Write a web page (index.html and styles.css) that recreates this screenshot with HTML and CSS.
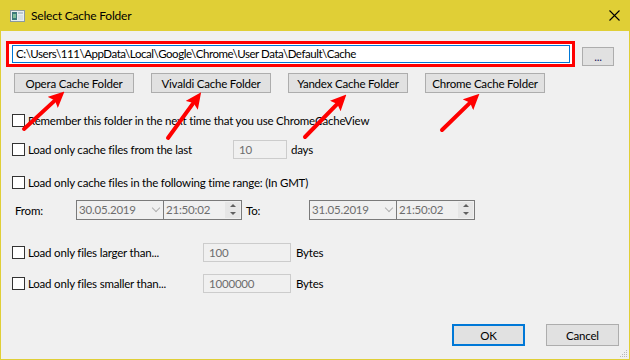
FILE: index.html
```html
<!DOCTYPE html>
<html lang="en">
<head>
    <meta charset="UTF-8">
    <title>Select Cache Folder</title>
    <link rel="stylesheet" href="styles.css">
</head>
<body>
    <div class="window">
        <div class="titlebar">
            <svg class="app-icon" width="15" height="12" viewBox="0 0 15 12">
                <rect x="0.5" y="0.5" width="14" height="11" fill="#e8eef0" stroke="#8a9aa0"/>
                <rect x="2" y="2" width="5" height="8" fill="#3c7a7a"/>
                <rect x="3" y="4" width="3" height="4" fill="#7fbf9a"/>
                <rect x="8" y="2" width="5" height="2" fill="#b8c8d0"/>
                <rect x="8" y="5" width="5" height="5" fill="#d6e0e4"/>
            </svg>
            <span class="title">Select Cache Folder</span>
            <svg class="close" width="11" height="11" viewBox="0 0 11 11">
                <path d="M0.5 0.5 L10.5 10.5 M10.5 0.5 L0.5 10.5" stroke="#000" stroke-width="1.1"/>
            </svg>
        </div>

        <div class="content">
            <div class="path-row">
                <div class="highlight">
                    <div class="path-input">C:\Users\111\AppData\Local\Google\Chrome\User Data\Default\Cache</div>
                </div>
                <button class="btn browse">...</button>
            </div>

            <div class="preset-row">
                <button class="btn preset">Opera Cache Folder</button>
                <button class="btn preset">Vivaldi Cache Folder</button>
                <button class="btn preset">Yandex Cache Folder</button>
                <button class="btn preset">Chrome Cache Folder</button>
            </div>

            <label class="row row-remember"><span class="box"></span>Remember this folder in the next time that you use ChromeCacheView</label>

            <div class="row row-last">
                <label class="check-label"><span class="box"></span>Load only cache files from the last</label>
                <div class="field days-field">10</div>
                <span class="unit">days</span>
            </div>

            <label class="row row-range"><span class="box"></span>Load only cache files in the following time range: (In GMT)</label>

            <div class="row row-from">
                <span class="from-label">From:</span>
                <div class="datetime">
                    <div class="date">30.05.2019<span class="chevron"></span></div>
                    <div class="time">21:50:02<span class="spin"><span class="up"></span><span class="down"></span></span></div>
                </div>
                <span class="to-label">To:</span>
                <div class="datetime">
                    <div class="date">31.05.2019<span class="chevron"></span></div>
                    <div class="time">21:50:02<span class="spin"><span class="up"></span><span class="down"></span></span></div>
                </div>
            </div>

            <div class="row row-larger">
                <label class="check-label"><span class="box"></span>Load only files larger than...</label>
                <div class="field size-field">100</div>
                <span class="unit">Bytes</span>
            </div>

            <div class="row row-smaller">
                <label class="check-label"><span class="box"></span>Load only files smaller than...</label>
                <div class="field size-field">1000000</div>
                <span class="unit">Bytes</span>
            </div>

            <div class="footer">
                <button class="btn ok">OK</button>
                <button class="btn cancel">Cancel</button>
            </div>
        </div>

        <!-- red arrows drawn over the screenshot -->
        <svg class="arrows" width="630" height="360" viewBox="0 0 630 360">
            <defs>
                <marker id="head" markerUnits="userSpaceOnUse" markerWidth="16" markerHeight="15" viewBox="0 0 16 15" refX="2" refY="7.5" orient="auto">
                    <path d="M0 0 L16 7.5 L0 15 L3 7.5 z" fill="#f00"/>
                </marker>
            </defs>
            <line x1="24" y1="129" x2="54.2" y2="101.1" marker-end="url(#head)"/>
            <line x1="168" y1="138" x2="192.9" y2="103.7" marker-end="url(#head)"/>
            <line x1="305" y1="137" x2="336.6" y2="104.6" marker-end="url(#head)"/>
            <line x1="442" y1="130" x2="469.4" y2="103.4" marker-end="url(#head)"/>
        </svg>

        <svg class="grip" width="9" height="9" viewBox="0 0 9 9">
            <g fill="#b8b8b8">
                <rect x="7" y="1" width="1" height="1"/>
                <rect x="5" y="3" width="1" height="1"/><rect x="7" y="3" width="1" height="1"/>
                <rect x="3" y="5" width="1" height="1"/><rect x="5" y="5" width="1" height="1"/><rect x="7" y="5" width="1" height="1"/>
                <rect x="1" y="7" width="1" height="1"/><rect x="3" y="7" width="1" height="1"/><rect x="5" y="7" width="1" height="1"/><rect x="7" y="7" width="1" height="1"/>
            </g>
        </svg>
    </div>
</body>
</html>
```

FILE: styles.css
```css
body {
    margin: 0;
    font-family: Lato, "Liberation Sans", sans-serif;
    font-size: 11.5px;
    letter-spacing: -0.2px;
    color: #000;
    background-color: #f0f0f0;
}
.window {
    position: relative;
    width: 630px;
    height: 360px;
    box-sizing: border-box;
    border: 1px solid #e0cf36;
    border-top: none;
    background-color: #f0f0f0;
    overflow: hidden;
}
.titlebar {
    display: flex;
    align-items: center;
    height: 31px;
    margin: 0 -1px;
    padding-left: 10px;
    background-color: #e0cf36;
}
.app-icon {
    margin-right: 6px;
}
.title {
    flex: 1;
    font-size: 12px;
}
.close {
    margin-right: 10px;
}
.content {
    padding-left: 5px;
}
.btn {
    font-family: inherit;
    font-size: 11.5px;
    letter-spacing: -0.2px;
    color: #000;
    background-color: #e1e1e1;
    border: 1px solid #adadad;
    padding: 0;
    margin: 0;
    white-space: nowrap;
}
.path-row {
    display: flex;
    align-items: flex-start;
    margin-top: 10px;
    height: 26px;
}
.highlight {
    box-sizing: border-box;
    width: 569px;
    height: 26px;
    border: 3px solid #f00;
    padding: 1px 2px 1px 3px;
    background-color: #fff;
}
.path-input {
    box-sizing: border-box;
    height: 18px;
    border: 1px solid #0078d7;
    padding-left: 3px;
    line-height: 16px;
    letter-spacing: -0.45px;
    background-color: #fff;
    white-space: nowrap;
}
.browse {
    width: 32px;
    height: 19px;
    margin: 6px 0 0 7px;
    line-height: 10px;
    color: #202060;
}
.preset-row {
    display: flex;
    gap: 17px;
    margin-top: 6px;
    padding-left: 8px;
}
.preset {
    width: 120px;
    height: 20px;
}
.row {
    display: flex;
    align-items: center;
    height: 20px;
    padding-left: 6px;
}
.check-label {
    display: flex;
    align-items: center;
}
.box {
    box-sizing: border-box;
    width: 13px;
    height: 13px;
    border: 1px solid #333;
    background-color: #fff;
    margin-right: 3px;
}
.row-remember {
    margin-top: 17px;
}
.row-last {
    margin-top: 9px;
}
.row-last .check-label {
    width: 221px;
}
.field {
    box-sizing: border-box;
    height: 19px;
    border: 1px solid #ccc;
    color: #6d6d6d;
    padding-left: 5px;
    line-height: 17px;
}
.days-field {
    width: 54px;
}
.unit {
    margin-left: 4px;
}
.row-range {
    margin-top: 13px;
}
.row-from {
    margin-top: 8px;
    padding-left: 9px;
}
.from-label {
    width: 61px;
}
.datetime {
    display: flex;
    height: 20px;
    box-sizing: border-box;
    border: 1px solid #7a7a7a;
    color: #6d6d6d;
}
.date, .time {
    position: relative;
    box-sizing: border-box;
    line-height: 18px;
    padding-left: 2px;
}
.date {
    width: 87px;
    border-right: 1px solid #7a7a7a;
}
.time {
    width: 77px;
}
.chevron {
    position: absolute;
    right: 4px;
    top: 4px;
    width: 5px;
    height: 5px;
    border-right: 1px solid #b0b0b0;
    border-bottom: 1px solid #b0b0b0;
    transform: rotate(45deg);
}
.spin {
    position: absolute;
    right: 1px;
    top: 1px;
    display: flex;
    flex-direction: column;
    width: 15px;
    height: 16px;
    background-color: #e6e6e6;
}
.spin span {
    flex: 1;
    position: relative;
}
.spin .up::after, .spin .down::after {
    content: "";
    position: absolute;
    left: 5px;
    border-left: 3px solid transparent;
    border-right: 3px solid transparent;
}
.spin .up::after {
    top: 2px;
    border-bottom: 3px solid #606060;
}
.spin .down::after {
    top: 2px;
    border-top: 3px solid #606060;
}
.to-label {
    width: 63px;
    padding-left: 4px;
    color: #000;
}
.row-larger {
    margin-top: 22px;
}
.row-smaller {
    margin-top: 11px;
}
.size-field {
    width: 88px;
}
.row-larger .check-label, .row-smaller .check-label {
    width: 191px;
}
.row-larger .unit, .row-smaller .unit {
    margin-left: 5px;
}
.footer {
    display: flex;
    justify-content: flex-end;
    gap: 21px;
    margin-top: 31px;
    padding-right: 10px;
}
.ok {
    width: 73px;
    height: 22px;
    border: 2px solid #0078d7;
}
.cancel {
    width: 73px;
    height: 22px;
}
.arrows {
    position: absolute;
    left: -1px;
    top: 0;
    pointer-events: none;
}
.arrows line {
    stroke: #f00;
    stroke-width: 4;
    stroke-linecap: round;
}
.grip {
    position: absolute;
    right: 1px;
    bottom: 1px;
}
```
